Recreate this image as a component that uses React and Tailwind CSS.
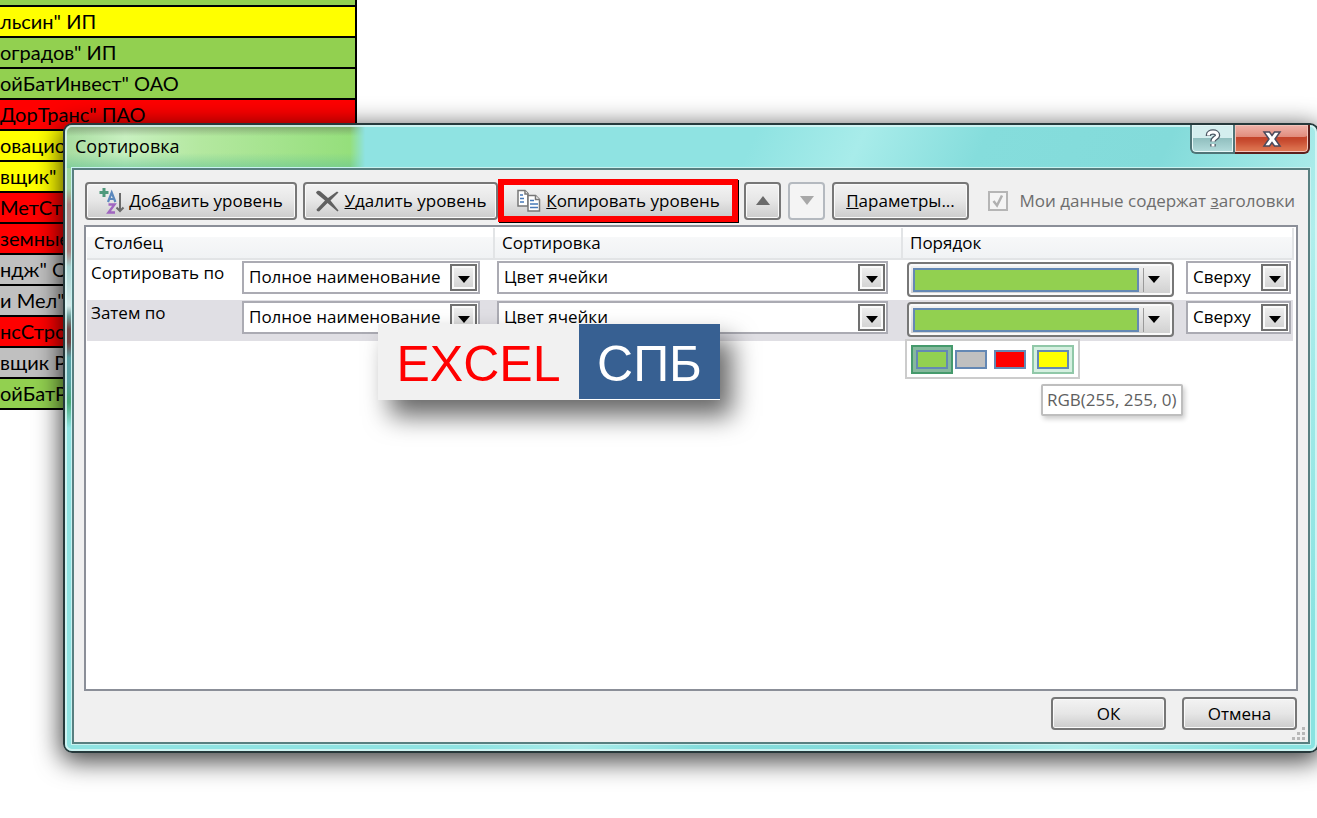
import { useState } from "react";

const ROWS = [
    { text: "", color: "bg-[#92d050]" },
    { text: 'льсин" ИП', color: "bg-[#ffff00]" },
    { text: 'оградов" ИП', color: "bg-[#92d050]" },
    { text: 'ойБатИнвест" ОАО', color: "bg-[#92d050]" },
    { text: 'ДорТранс" ПАО', color: "bg-[#ff0000]" },
    { text: "овацио", color: "bg-[#ffff00]" },
    { text: 'вщик"', color: "bg-[#ffff00]" },
    { text: "МетСт", color: "bg-[#ff0000]" },
    { text: "земные", color: "bg-[#ff0000]" },
    { text: 'ндж" О', color: "bg-[#c0c0c0]" },
    { text: 'и Мел"', color: "bg-[#c0c0c0]" },
    { text: "нсСтрой", color: "bg-[#ff0000]" },
    { text: "вщик Р", color: "bg-[#c0c0c0]" },
    { text: "ойБатРе", color: "bg-[#92d050]" },
];

const BUTTON =
    "flex items-center justify-center rounded-[4px] border-2 border-[#777] bg-linear-to-b from-[#f3f3f3] via-[#e6e6e6] via-50% to-[#cccccc] shadow-[inset_0_0_0_1px_#fafafa] whitespace-nowrap";

/*
    ICONS
*/
function AddLevelIcon() {
    return (
        <svg width="28" height="28" viewBox="0 0 28 28" fill="none">
            <path d="M5 1v9M0.500 5.500h9" stroke="#4f9a7c" strokeWidth="3" />
            <path d="M9 15l3.700-9.500L16.400 15M10.500 12h4.500" stroke="#5b88bd" strokeWidth="2.200" />
            <path d="M9.500 17.500h6L9.500 25.500h6.500" stroke="#a066c0" strokeWidth="2.400" />
            <path d="M21 6v18M17.500 20.500l3.500 3.500 3.500-3.500" stroke="#6a6a6a" strokeWidth="2" />
        </svg>
    );
}

function DeleteIcon() {
    return (
        <svg width="26" height="24" viewBox="0 0 26 24" fill="#606060">
            <path d="M1 3.500C2 1.500 4 1 5.500 2.500L13 9l9-6.500 1.500 1L15.500 11.500 23.500 21.500l-1 1L12.500 14 4 22.500 2 22 1.500 20.500 10 11.500 2 5z" />
        </svg>
    );
}

function CopyIcon() {
    return (
        <svg width="26" height="24" viewBox="0 0 26 24" fill="#fff" stroke="#777" strokeWidth="1.500">
            <path d="M2 1.500h7l3 3V17H2z" />
            <path d="M9 1.500V5h3" />
            <path d="M4 6h3M4 9.500h4M4 13h4" stroke="#4779b8" />
            <path d="M12 6.500h7.500l4 4V22H12z" />
            <path d="M19.500 6.500v4h4" />
            <path d="M14 11.500h4M14 15h8M14 18.500h8" stroke="#4779b8" />
        </svg>
    );
}

function Arrow({ up }) {
    return (
        <svg width="14" height="9" viewBox="0 0 14 9" fill="currentColor">
            <path d={up ? "M7 0l7 9H0z" : "M0 0h14L7 9z"} />
        </svg>
    );
}

function SmallArrow() {
    return (
        <svg width="12" height="7" viewBox="0 0 12 7" fill="currentColor">
            <path d="M0 0h12L6 7z" />
        </svg>
    );
}

/*
    DROP-DOWN
*/
function Select({ label, options, className }) {
    return (
        <div className={`relative ${className}`}>
            <select
                aria-label={label}
                className="w-full h-[33px] appearance-none border-2 border-[#ababb3] bg-white pl-[5px] pb-0.5 outline-none"
            >
                {options.map((option) => (
                    <option key={option}>{option}</option>
                ))}
            </select>

            <span className="absolute right-[3px] top-[3px] size-[27px] flex items-center justify-center border-2 border-[#707070] bg-linear-to-b from-[#f0f0f0] to-[#d2d2d2] pt-1 shadow-[inset_0_0_0_2px_#fafafa] text-black pointer-events-none">
                <SmallArrow />
            </span>
        </div>
    );
}

function ColorButton({ open, onClick }) {
    return (
        <button
            aria-label="Цвет"
            aria-expanded={open}
            onClick={onClick}
            className="w-[267px] h-[35px] flex items-center rounded-[4px] border-2 border-[#777] bg-linear-to-b from-[#f3f3f3] to-[#cfcfcf] pl-1 shadow-[inset_0_0_0_2px_#fafafa]"
        >
            <span className="h-6 flex-1 border-2 border-[#6488b4] bg-[#92d050]" />
            <span className="ml-1 h-6 w-px bg-[#999]" />
            <span className="w-7 pr-2 flex justify-center text-black">
                <SmallArrow />
            </span>
        </button>
    );
}

function Palette() {
    const swatch = "block h-[19px] w-8 border-2 border-[#6488b4]";

    return (
        <div className="absolute left-[3px] top-[39px] z-10">
            <div className="w-[175px] h-10 flex items-center justify-between border-2 border-[#ccc] bg-white px-1">
                <button aria-label="Зелёный" className="border-2 border-[#459a6c] bg-[#85b99c] p-[3px]">
                    <span className={`${swatch} bg-[#92d050]`} />
                </button>
                <button aria-label="Серый">
                    <span className={`${swatch} bg-[#c0c0c0]`} />
                </button>
                <button aria-label="Красный" className="mx-1">
                    <span className={`${swatch} bg-[#ff0000]`} />
                </button>
                <button aria-label="Жёлтый" className="border-2 border-[#90c8a8] bg-[#d5f0e0] p-[3px]">
                    <span className={`${swatch} bg-[#ffff00]`} />
                </button>
            </div>

            <div
                role="tooltip"
                className="absolute left-[136px] top-[45px] h-8 flex items-center rounded-[2px] border-2 border-[#bebebe] bg-white px-1 text-[#5f5f5f] whitespace-nowrap shadow-[2px_3px_5px_rgba(0,0,0,0.2)]"
            >
                RGB(255, 255, 0)
            </div>
        </div>
    );
}

function Level({ name, active, children, onPick }) {
    return (
        <tr className={`h-[41px] align-top ${active ? "bg-[#e0dfe4]" : "bg-white"}`}>
            <td className="pt-px">
                <div className="flex">
                    <span className="w-[155px] pl-1">{name}</span>
                    <Select label={name} options={["Полное наименование"]} className="w-[238px]" />
                </div>
            </td>
            <td className="pt-px pl-[3px]">
                <Select label="Сортировка" options={["Цвет ячейки"]} className="w-[391px]" />
            </td>
            <td className="relative pt-px pl-[5px] pr-0.5">
                <div className="flex justify-between">
                    <div className="pt-px">
                        <ColorButton open={active} onClick={onPick} />
                    </div>
                    <Select label="Порядок" options={["Сверху", "Снизу"]} className="w-[105px]" />
                </div>
                {children}
            </td>
        </tr>
    );
}

function Sheet() {
    return (
        <table className="-mt-[26px] w-[357px] table-fixed border-collapse font-[Lato,Carlito,sans-serif] text-[20px] text-black">
            <tbody>
                {ROWS.map((row, i) => (
                    <tr key={i} className={`h-[31px] ${row.color}`}>
                        <td className="border-y-2 border-r-2 border-black p-0 leading-[29px] whitespace-nowrap overflow-hidden">
                            {row.text}
                        </td>
                    </tr>
                ))}
            </tbody>
        </table>
    );
}

function TitleBar() {
    return (
        <div className="relative h-[43px] flex items-start justify-between pl-[3px]">
            <h1 className="pt-2 text-[18px] leading-[26px]">Сортировка</h1>

            <div className="flex h-[29px]">
                <button
                    aria-label="Справка"
                    className="w-[45px] flex items-center justify-center rounded-bl-[6px] border-2 border-t-0 border-[#4f7477] bg-linear-to-b from-[#d4eeee] from-50% via-[#91bfbf] via-50% to-[#b4dcdc] shadow-[inset_0_0_0_1px_#e6f7f7]"
                >
                    <svg width="16" height="20" viewBox="0 0 16 20" fill="none" strokeLinejoin="round">
                        <path d="M3.500 7V6c0-2 2-3 4.500-3s4.500 1.200 4.500 3.500S8 9 8 12.500M8 15v2.500" stroke="#4b5562" strokeWidth="5.500" />
                        <path d="M3.500 6.500V6c0-2 2-3 4.500-3s4.500 1.200 4.500 3.500S8 9 8 12.500M8 15v2.500" stroke="#fff" strokeWidth="3" />
                    </svg>
                </button>
                <button
                    aria-label="Закрыть"
                    className="w-[75px] flex items-center justify-center rounded-br-[6px] border-2 border-t-0 border-l-0 border-[#5d1f1b] bg-linear-to-b from-[#efb3aa] via-[#df8878] via-50% to-[#e08060] shadow-[inset_0_0_0_1px_#f3c4bb,inset_0_-13px_8px_-6px_#e07a55,inset_0_-15px_0_0_#c3432a]"
                >
                    <svg width="20" height="18" viewBox="0 0 20 18" fill="#fff" stroke="#4a4a5c" strokeWidth="1.500">
                        <path d="M2 2h5.500L10 5.500 12.500 2H18l-5 7 5 7h-5.500L10 12.500 7.500 16H2l5-7z" />
                    </svg>
                </button>
            </div>
        </div>
    );
}

function Toolbar() {
    const [headers, setHeaders] = useState(true);

    return (
        <div className="flex items-center pl-px pr-[3px]">
            <button className={`${BUTTON} h-[38px] w-[212px] gap-0.5`}>
                <AddLevelIcon />
                <span>
                    Доб<u>а</u>вить уровень
                </span>
            </button>

            <button className={`${BUTTON} ml-1.5 h-[38px] w-[195px] gap-1`}>
                <DeleteIcon />
                <span>
                    <u>У</u>далить уровень
                </span>
            </button>

            <button className="h-[43px] w-[240px] flex items-center justify-center gap-1 border-6 border-[#ff0000] bg-linear-to-b from-[#f3f3f3] via-[#e6e6e6] to-[#cccccc] whitespace-nowrap shadow-[1px_1px_0_#000]">
                <CopyIcon />
                <span>
                    <u>К</u>опировать уровень
                </span>
            </button>

            <button aria-label="Вверх" className={`${BUTTON} ml-1.5 h-[38px] w-[37px] text-[#6a6a6a]`}>
                <Arrow up />
            </button>

            <button
                aria-label="Вниз"
                disabled
                className="ml-[7px] h-[38px] w-[37px] flex items-center justify-center rounded-[4px] border-2 border-[#b4b9bf] bg-[#f4f4f4] text-[#a8a8a8]"
            >
                <Arrow />
            </button>

            <button className={`${BUTTON} ml-[7px] h-[38px] w-[137px]`}>
                <span>
                    <u>П</u>араметры...
                </span>
            </button>

            <label className="ml-auto flex items-center gap-3 text-[#6d6d6d] whitespace-nowrap">
                <span className="relative flex size-5">
                    <input
                        type="checkbox"
                        checked={headers}
                        onChange={(e) => setHeaders(e.target.checked)}
                        className="size-5 appearance-none border-2 border-[#b5b5b5] bg-[#f4f4f4]"
                    />
                    {headers && (
                        <svg
                            className="absolute inset-0 pointer-events-none"
                            width="20"
                            height="20"
                            viewBox="0 0 20 20"
                            fill="none"
                            stroke="#b0b0b0"
                            strokeWidth="2.500"
                        >
                            <path d="M5.500 10l3.500 4.500L14 4.500" />
                        </svg>
                    )}
                </span>
                <span>
                    Мои данные содержат <u>з</u>аголовки
                </span>
            </label>
        </div>
    );
}

function App() {
    const [paletteOpen, setPaletteOpen] = useState(true);
    const th = "border-b-2 border-r-2 border-[#e2e4e6] p-0 pl-[7px] text-left font-normal";

    return (
        <div className="relative min-h-screen overflow-hidden bg-white font-['Open_Sans','Noto_Sans',sans-serif] text-[17px] leading-6 text-black">
            <Sheet />

            {/* SORT DIALOG */}
            <div
                role="dialog"
                aria-label="Сортировка"
                className="absolute left-[63px] -right-0.5 top-[123px] bottom-[65px] flex flex-col rounded-[9px] border-2 border-[#26393b] bg-[linear-gradient(115deg,#8fe3e2_45%,#a8ecea_52%,#85dddc_60%,#83dbda_72%,#b0eeec_84%,#8ae3e1_96%)] p-[7px] pt-0 shadow-[0_6px_26px_2px_rgba(0,0,0,0.75)]"
            >
                {/* glass tint from the rows behind */}
                <div className="absolute left-0 top-0 h-[62px] w-[300px] rounded-tl-[7px] bg-[linear-gradient(to_bottom,rgba(90,100,80,0.5),transparent_18%,transparent_45%,rgba(100,195,150,0.6)_70%),linear-gradient(to_right,#a8dca0,#c8f0c0_20%,#b4e8a0_45%,#92de78)] mask-[linear-gradient(to_right,black_95%,transparent)]" />
                <div className="absolute left-0 top-[43px] h-[260px] w-[10px] bg-[linear-gradient(to_bottom,#9bd79b,#a0d0a0_8%,#a88482_14%,#a88482_32%,#a8d4d2_38%,#d5e8e8_53%,#6fa09c_57%,#6e4646_62%,#6e4646_67%,#58a0a4_73%,#58a0a4_82%,#48a878_90%,#8fe3e2)]" />
                <div className="absolute inset-0 rounded-[7px] border-2 border-[#ddf7f6]/80 pointer-events-none" />

                <TitleBar />

                <div className="relative flex-1 flex flex-col border-2 border-[#587f80] bg-[#f0f0f0] px-[10px] pt-[9px] pb-3 shadow-[0_0_0_1px_#c8f2f0]">
                    <Toolbar />

                    {/* LEVELS */}
                    <div className="mt-[3px] flex-1 border-2 border-[#8b8f98] bg-white p-px pr-0.5">
                        <table className="w-full table-fixed border-collapse">
                            <colgroup>
                                <col className="w-[407px]" />
                                <col className="w-[408px]" />
                                <col />
                            </colgroup>
                            <thead>
                                <tr className="h-[31px] bg-linear-to-b from-white from-30% via-[#f7f8f9] via-30% to-[#f0f2f4]">
                                    <th className={th}>Столбец</th>
                                    <th className={th}>Сортировка</th>
                                    <th className={th}>Порядок</th>
                                </tr>
                            </thead>
                            <tbody>
                                <Level name="Сортировать по" />
                                <Level
                                    name="Затем по"
                                    active
                                    onPick={() => setPaletteOpen(!paletteOpen)}
                                >
                                    {paletteOpen && <Palette />}
                                </Level>
                            </tbody>
                        </table>
                    </div>

                    <div className="mt-1.5 flex justify-end gap-4 pr-px">
                        <button className={`${BUTTON} h-[33px] w-[115px]`}>ОК</button>
                        <button className={`${BUTTON} h-[33px] w-[115px]`}>Отмена</button>
                    </div>

                    <svg className="absolute right-0.5 bottom-0.5" width="14" height="14" viewBox="0 0 14 14" fill="#b8b8b8">
                        <path d="M10 1h3v3h-3zM5 6h3v3H5zM10 6h3v3h-3zM0 11h3v3H0zM5 11h3v3H5zM10 11h3v3h-3z" />
                    </svg>
                </div>
            </div>

            {/* BRAND */}
            <div className="absolute left-[378px] top-[324px] z-20 h-[76px] flex font-['Liberation_Sans',Arial,sans-serif] text-[50px] leading-[80px] shadow-[12px_16px_26px_rgba(0,0,0,0.6)]">
                <span className="w-[201px] bg-[#f1f1f1] h-[76px] text-center text-[#ff0000]">EXCEL</span>
                <span className="w-[141px] bg-[#376092] h-[75px] text-center text-white">СПБ</span>
            </div>
        </div>
    );
}

export default App;
